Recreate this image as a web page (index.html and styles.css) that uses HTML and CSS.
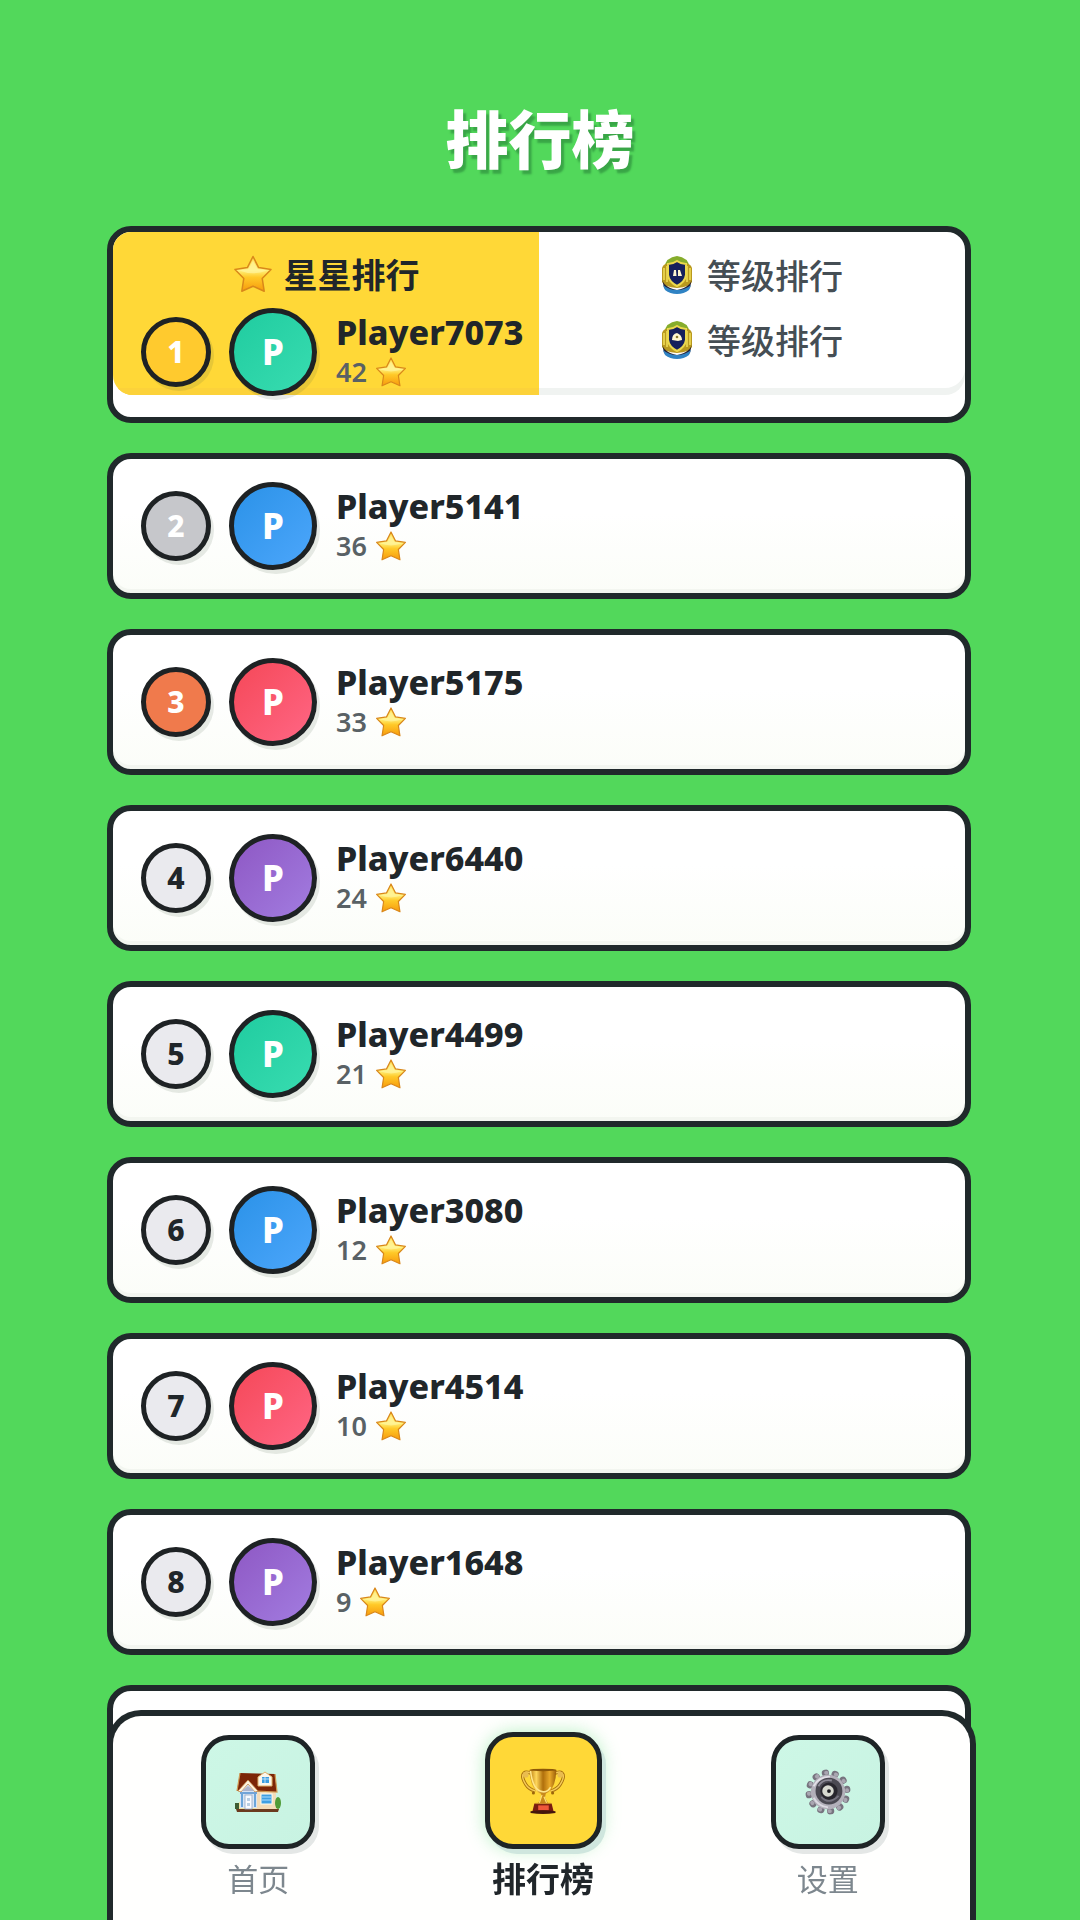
FILE: index.html
```html
<!DOCTYPE html>
<html lang="zh-CN">
<head>
    <meta charset="UTF-8">
    <meta name="viewport" content="width=device-width, initial-scale=1.0">
    <title>排行榜</title>
    <link rel="stylesheet" href="styles.css">
</head>
<body>

    <!-- 共用图标 -->
    <svg class="sprite" aria-hidden="true">
        <defs>
            <linearGradient id="starFill" x1="0" y1="0" x2="0" y2="1">
                <stop offset="0" stop-color="#ffd94a"/>
                <stop offset="0.4" stop-color="#fff07a"/>
                <stop offset="0.6" stop-color="#ffc928"/>
                <stop offset="1" stop-color="#f79a0c"/>
            </linearGradient>
            <linearGradient id="goldFill" x1="0" y1="0" x2="1" y2="0">
                <stop offset="0" stop-color="#b8790f"/>
                <stop offset="0.25" stop-color="#ffd75a"/>
                <stop offset="0.5" stop-color="#b06f0c"/>
                <stop offset="0.75" stop-color="#e9a92a"/>
                <stop offset="1" stop-color="#9a5d08"/>
            </linearGradient>
            <symbol id="star" viewBox="0 0 40 40">
                <path d="M20 2.5 L25.6 13.6 L38 15.4 L29.2 24.4 L31.2 37.2 L20 32.2 L8.8 37.2 L10.8 24.4 L2 15.4 L14.4 13.6 Z" fill="url(#starFill)" stroke="#d9871a" stroke-width="1.5" stroke-linejoin="round"/>
                <path d="M20 6.5 L15.6 15 L6 16.6 Q20 22 34 16.6 L24.4 15 Z" fill="#fff6a8" opacity="0.6"/>
            </symbol>
            <symbol id="badge" viewBox="0 0 32 38">
                <path d="M3 12 Q5 1 16 0 Q27 1 29 12 Z" fill="#86ad2c"/>
                <path d="M1 12 Q3 7 8 8 L24 8 Q29 7 31 12 L31 26 Q29 31 16 32 Q3 31 1 26 Z" fill="#b9991f"/>
                <path d="M3 12 L3 24 M6 10 L6 26 M29 12 L29 24 M26 10 L26 26" stroke="#efdb55" stroke-width="1.6"/>
                <path d="M1 22 Q2 31 16 34 Q30 31 31 22 L29 32 Q24 36 16 36 Q8 36 3 32 Z" fill="#2b2230"/>
                <path d="M2 29 Q8 34 16 34 Q24 34 30 29 L28 34 Q23 38 16 38 Q9 38 4 34 Z" fill="#2f83c4"/>
                <path d="M7 8 Q12 8 16 5 Q20 8 25 8 L25 19 Q24 26 16 30 Q8 26 7 19 Z" fill="#16205c" stroke="#ecd84c" stroke-width="2"/>
            </symbol>
        </defs>
    </svg>

    <h1 class="title">排行榜</h1>

    <div class="board">
        <section class="card card-first">
            <div class="tabs">
                <button class="tab tab-active" type="button">
                    <svg class="tab-star"><use href="#star"/></svg>
                    <span>星星排行</span>
                </button>
                <div class="tab-column">
                    <button class="tab" type="button">
                        <svg class="tab-badge" viewBox="0 0 32 38">
                            <use href="#badge"/>
                            <path d="M12 20 L13 14 L15 14 L15.5 20 Z M17 20 L17 14 L19 14 L21 20 Z" fill="#fff6cf"/>
                        </svg>
                        <span>等级排行</span>
                    </button>
                    <button class="tab" type="button">
                        <svg class="tab-badge" viewBox="0 0 32 38">
                            <use href="#badge"/>
                            <path d="M11 19 Q11 13 16 12 Q21 14 21 19 L17 20 Z" fill="#fff6cf"/>
                            <circle cx="16" cy="16" r="1.3" fill="#8a7a2a"/>
                        </svg>
                        <span>等级排行</span>
                    </button>
                </div>
            </div>
            <div class="player">
                <span class="rank rank-gold">1</span>
                <span class="avatar green">P</span>
                <div class="info">
                    <div class="name">Player7073</div>
                    <div class="score">42 <svg class="score-star"><use href="#star"/></svg></div>
                </div>
            </div>
        </section>

        <section class="card">
            <div class="player">
                <span class="rank rank-silver">2</span>
                <span class="avatar blue">P</span>
                <div class="info">
                    <div class="name">Player5141</div>
                    <div class="score">36 <svg class="score-star"><use href="#star"/></svg></div>
                </div>
            </div>
        </section>

        <section class="card">
            <div class="player">
                <span class="rank rank-bronze">3</span>
                <span class="avatar red">P</span>
                <div class="info">
                    <div class="name">Player5175</div>
                    <div class="score">33 <svg class="score-star"><use href="#star"/></svg></div>
                </div>
            </div>
        </section>

        <section class="card">
            <div class="player">
                <span class="rank">4</span>
                <span class="avatar purple">P</span>
                <div class="info">
                    <div class="name">Player6440</div>
                    <div class="score">24 <svg class="score-star"><use href="#star"/></svg></div>
                </div>
            </div>
        </section>

        <section class="card">
            <div class="player">
                <span class="rank">5</span>
                <span class="avatar green">P</span>
                <div class="info">
                    <div class="name">Player4499</div>
                    <div class="score">21 <svg class="score-star"><use href="#star"/></svg></div>
                </div>
            </div>
        </section>

        <section class="card">
            <div class="player">
                <span class="rank">6</span>
                <span class="avatar blue">P</span>
                <div class="info">
                    <div class="name">Player3080</div>
                    <div class="score">12 <svg class="score-star"><use href="#star"/></svg></div>
                </div>
            </div>
        </section>

        <section class="card">
            <div class="player">
                <span class="rank">7</span>
                <span class="avatar red">P</span>
                <div class="info">
                    <div class="name">Player4514</div>
                    <div class="score">10 <svg class="score-star"><use href="#star"/></svg></div>
                </div>
            </div>
        </section>

        <section class="card">
            <div class="player">
                <span class="rank">8</span>
                <span class="avatar purple">P</span>
                <div class="info">
                    <div class="name">Player1648</div>
                    <div class="score">9 <svg class="score-star"><use href="#star"/></svg></div>
                </div>
            </div>
        </section>

        <section class="card"></section>
    </div>

    <!-- 底部导航 -->
    <nav class="navbar">
        <a class="nav-item" href="#home">
            <span class="nav-icon">
                <svg viewBox="0 0 46 42">
                    <path d="M2 33 L6 30 L40 30 L44 33 L44 39 L2 39 Z" fill="#efe3a6"/>
                    <path d="M1 38 L44 38 L43 41 L2 41 Z" fill="#6b3a1e"/>
                    <rect x="21" y="20" width="20" height="18" fill="#f3dcb8"/>
                    <path d="M5 2 L40 3 L42 21 L2 20 Z" fill="#7c2608"/>
                    <path d="M5 2 L2 20 M40 3 L42 21 L22 20" fill="none" stroke="#d09a55" stroke-width="1.2"/>
                    <path d="M23 15 L23 6 L30 1 L37 6 L37 15 Z" fill="#fbf7ec" stroke="#e0b26a" stroke-width="1"/>
                    <path d="M27 6 H34 V12 H27 Z" fill="#3b9de0"/>
                    <path d="M27 8 H34 M30 6 V12" stroke="#d8f0ff" stroke-width="0.8"/>
                    <path d="M5 37 L5 20 L13 11 L22 20 L22 37 Z" fill="#d9e4f4"/>
                    <path d="M3 20 L13 9 L23 20 L20 21 L13 13 L6 21 Z" fill="#fff4df" stroke="#c58b4e" stroke-width="0.8"/>
                    <path d="M7 20 L13 15 L19 20 Z" fill="#aeb4cc"/>
                    <path d="M5 22 H22" stroke="#4f8fcf" stroke-width="1.5"/>
                    <path d="M7 23 V36 M20 23 V36" stroke="#6aa5da" stroke-width="2"/>
                    <rect x="10" y="24" width="7" height="14" fill="#f9fbff" stroke="#93a7c2" stroke-width="0.8"/>
                    <path d="M12 27 H15 V30 H12 Z M12 32 H15 V35 H12 Z" fill="#b9cee4"/>
                    <rect x="26" y="23" width="11" height="10" fill="#3f9fe2" stroke="#fffdf2" stroke-width="1"/>
                    <path d="M27 26 H36 M27 29 H36" stroke="#a9dcff" stroke-width="1"/>
                    <ellipse cx="43" cy="32" rx="3" ry="6" fill="#4f9b36"/>
                    <rect x="0" y="32" width="4" height="6" fill="#3d5d33"/>
                </svg>
            </span>
            <span class="nav-label">首页</span>
        </a>
        <a class="nav-item nav-active" href="#rank">
            <span class="nav-icon">
                <svg viewBox="0 0 46 48">
                    <path d="M12 6 Q4 2 2 7 Q1 11 5 17 Q8 22 15 24" fill="none" stroke="#a8700f" stroke-width="3.4"/>
                    <path d="M12 6 Q4 2 2 7 Q1 11 5 17 Q8 22 15 24" fill="none" stroke="#f5cd59" stroke-width="1.5"/>
                    <path d="M34 6 Q42 2 44 7 Q45 11 41 17 Q38 22 31 24" fill="none" stroke="#a8700f" stroke-width="3.4"/>
                    <path d="M34 6 Q42 2 44 7 Q45 11 41 17 Q38 22 31 24" fill="none" stroke="#f5cd59" stroke-width="1.5"/>
                    <circle cx="5" cy="7" r="3" fill="#e9bc4f"/>
                    <circle cx="41" cy="7" r="3" fill="#e9bc4f"/>
                    <path d="M9 2 H37 Q36 20 29 25 Q26 27 23 27 Q20 27 17 25 Q10 20 9 2 Z" fill="url(#goldFill)"/>
                    <path d="M10 3 Q12 21 20 24 Q27 27 31 20" fill="none" stroke="#ffe68a" stroke-width="1.6"/>
                    <ellipse cx="23" cy="2" rx="14" ry="1.3" fill="#8e5808"/>
                    <circle cx="13" cy="26" r="1.6" fill="#9b650b"/>
                    <circle cx="33" cy="26" r="1.6" fill="#9b650b"/>
                    <path d="M21 26 H26 L25 31 L29 38 H17 L21 31 Z" fill="#c98a1c"/>
                    <path d="M22 28 L19 37 M24 30 L27 37" stroke="#ffe07a" stroke-width="1.2"/>
                    <path d="M14 37 H32 L34 45 H12 Z" fill="#7a1c10"/>
                    <rect x="18" y="39" width="11" height="5" fill="#f0583a"/>
                    <path d="M15 37 H31" stroke="#c88628" stroke-width="1.3"/>
                    <path d="M10 45 Q23 43 36 45 L36 47 Q23 49 10 47 Z" fill="#44150c"/>
                </svg>
            </span>
            <span class="nav-label">排行榜</span>
        </a>
        <a class="nav-item" href="#settings">
            <span class="nav-icon">
                <svg viewBox="0 0 48 48">
                    <circle cx="24" cy="24" r="20" fill="none" stroke="#77747f" stroke-width="7" stroke-linecap="round" pathLength="120" stroke-dasharray="0.6 9.4" stroke-dashoffset="3"/>
                    <circle cx="24" cy="24" r="20" fill="none" stroke="#a9a6b1" stroke-width="4" stroke-linecap="round" pathLength="120" stroke-dasharray="0.6 9.4" stroke-dashoffset="2"/>
                    <circle cx="24" cy="24" r="18" fill="#b3b0ba"/>
                    <path d="M9 18 Q14 8 26 8" fill="none" stroke="#e2e0e8" stroke-width="2"/>
                    <path d="M9 30 Q14 39 24 40" fill="none" stroke="#dcdae2" stroke-width="2"/>
                    <circle cx="25" cy="23" r="14" fill="#4b4952"/>
                    <path d="M14 18 Q18 10 28 12" fill="none" stroke="#8d8a96" stroke-width="2"/>
                    <circle cx="25" cy="23" r="9" fill="#28262d"/>
                    <path d="M17 29 Q25 38 35 28" fill="none" stroke="#76737f" stroke-width="2"/>
                    <circle cx="24" cy="23" r="6" fill="#d8d9d0"/>
                    <circle cx="25" cy="23" r="2" fill="#1c1b20"/>
                </svg>
            </span>
            <span class="nav-label">设置</span>
        </a>
    </nav>

</body>
</html>
```
FILE: styles.css
```css
* {
    box-sizing: border-box;
}

html {
    background-color: #52d85b;
}

body {
    font-family: "Noto Sans", "Noto Sans CJK SC", sans-serif;
    margin: 0;
    height: 100vh;
    overflow: hidden;
    color: #20262a;
}

.sprite {
    position: absolute;
    width: 0;
    height: 0;
}

.title {
    margin: 0;
    padding: 91px 0 45px;
    font-family: "Noto Sans CJK SC", sans-serif;
    font-size: 63px;
    font-weight: 900;
    line-height: 90px;
    text-align: center;
    color: white;
    text-shadow: 3px 4px 2px rgba(20, 90, 40, 0.4);
}

/* Список карточек */
.board {
    display: flex;
    flex-direction: column;
    gap: 30px;
    padding: 0 109px 0 107px;
}

.card {
    display: grid;
    flex-shrink: 0;
    min-height: 146px;
    border: 6px solid #20292b;
    border-radius: 24px;
    background: linear-gradient(#ffffff 40%, #fbfdf8);
    box-shadow: inset 0 -4px 0 #f3f6f0;
    overflow: hidden;
}

.card-first {
    min-height: 197px;
    background: white;
    box-shadow: none;
}

/* 标签 */
.tabs {
    grid-area: 1 / 1;
    align-self: start;
    display: grid;
    grid-template-columns: 1fr 1fr;
    border-radius: 0 0 20px 20px;
    overflow: hidden;
    min-height: 163px;
    box-shadow: inset 0 -7px 0 #f0f3f1;
}

.tab {
    display: flex;
    justify-content: center;
    align-items: center;
    gap: 14px;
    width: 100%;
    height: 65px;
    padding: 0;
    border: none;
    background: none;
    font-family: "Noto Sans CJK SC", sans-serif;
    font-size: 34px;
    font-weight: 500;
    line-height: 40px;
    color: #454e54;
    cursor: pointer;
}

.tab-active {
    align-items: flex-start;
    gap: 11px;
    height: 100%;
    padding-top: 22px;
    background-color: #ffd837;
    box-shadow: inset 0 -7px 0 #fcd23a;
    font-weight: 700;
    color: #20262a;
}

.tab-column {
    padding-top: 10px;
}

.tab-star {
    width: 40px;
    height: 40px;
}

.tab-badge {
    width: 32px;
    height: 38px;
}

/* 玩家 */
.player {
    grid-area: 1 / 1;
    display: flex;
    align-items: center;
    padding: 0 28px;
    z-index: 1;
}

.card-first .player {
    align-self: end;
    padding-bottom: 21px;
    pointer-events: none;
}

.rank,
.avatar {
    display: flex;
    justify-content: center;
    align-items: center;
    flex-shrink: 0;
    border: 5px solid #1e2224;
    border-radius: 50%;
    box-shadow: 3px 4px 0 rgba(60, 80, 60, 0.12);
    font-weight: 800;
}

.rank {
    width: 70px;
    height: 70px;
    margin-right: 18px;
    background-color: #eaeaee;
    font-size: 30px;
    line-height: 40px;
}

.rank-gold {
    background-color: #ffca2e;
    color: white;
}

.rank-silver {
    background-color: #c6c7cb;
    color: white;
}

.rank-bronze {
    background-color: #f07a4c;
    color: white;
}

.avatar {
    width: 88px;
    height: 88px;
    margin-right: 17px;
    font-size: 35px;
    line-height: 40px;
    color: white;
}

.green {
    background: linear-gradient(135deg, #20cca0, #38dcb0);
}

.blue {
    background: linear-gradient(135deg, #2b92e8, #4ca6fb);
}

.red {
    background: linear-gradient(135deg, #f54858, #ff6684);
}

.purple {
    background: linear-gradient(135deg, #8e58c4, #a27ce0);
}

.info {
    padding-left: 2px;
}

.name {
    font-size: 34px;
    font-weight: 800;
    line-height: 40px;
}

.score {
    display: flex;
    align-items: center;
    gap: 8px;
    font-size: 27px;
    font-weight: 600;
    line-height: 40px;
    color: #596165;
}

.score-star {
    width: 32px;
    height: 32px;
}

/* 底部导航 */
.navbar {
    position: fixed;
    left: 107px;
    right: 104px;
    bottom: 0;
    z-index: 2;
    display: flex;
    align-items: flex-end;
    padding: 16px 0 22px 3px;
    border: 6px solid #20292b;
    border-bottom: none;
    border-radius: 34px 34px 0 0;
    background-color: #fffffe;
}

.nav-item {
    flex: 1;
    display: flex;
    flex-direction: column;
    align-items: center;
    gap: 9px;
    text-decoration: none;
    font-family: "Noto Sans CJK SC", sans-serif;
    font-size: 31px;
    font-weight: 400;
    line-height: 40px;
    color: #7d878e;
}

.nav-icon {
    display: flex;
    justify-content: center;
    align-items: center;
    width: 114px;
    height: 114px;
    border: 5px solid #1e2426;
    border-radius: 28px;
    background: linear-gradient(135deg, #cdf7e6, #c8f3e2);
    box-shadow: 4px 5px 0 #e4e7e6;
}

.nav-icon svg {
    width: 46px;
    height: 46px;
}

.nav-active {
    font-size: 34px;
    font-weight: 700;
    color: #20262a;
}

.nav-active .nav-icon {
    width: 117px;
    height: 117px;
    background: #ffd837;
    box-shadow: 4px 5px 0 #cfe6de, 0 0 18px rgba(80, 217, 110, 0.4);
}
```
